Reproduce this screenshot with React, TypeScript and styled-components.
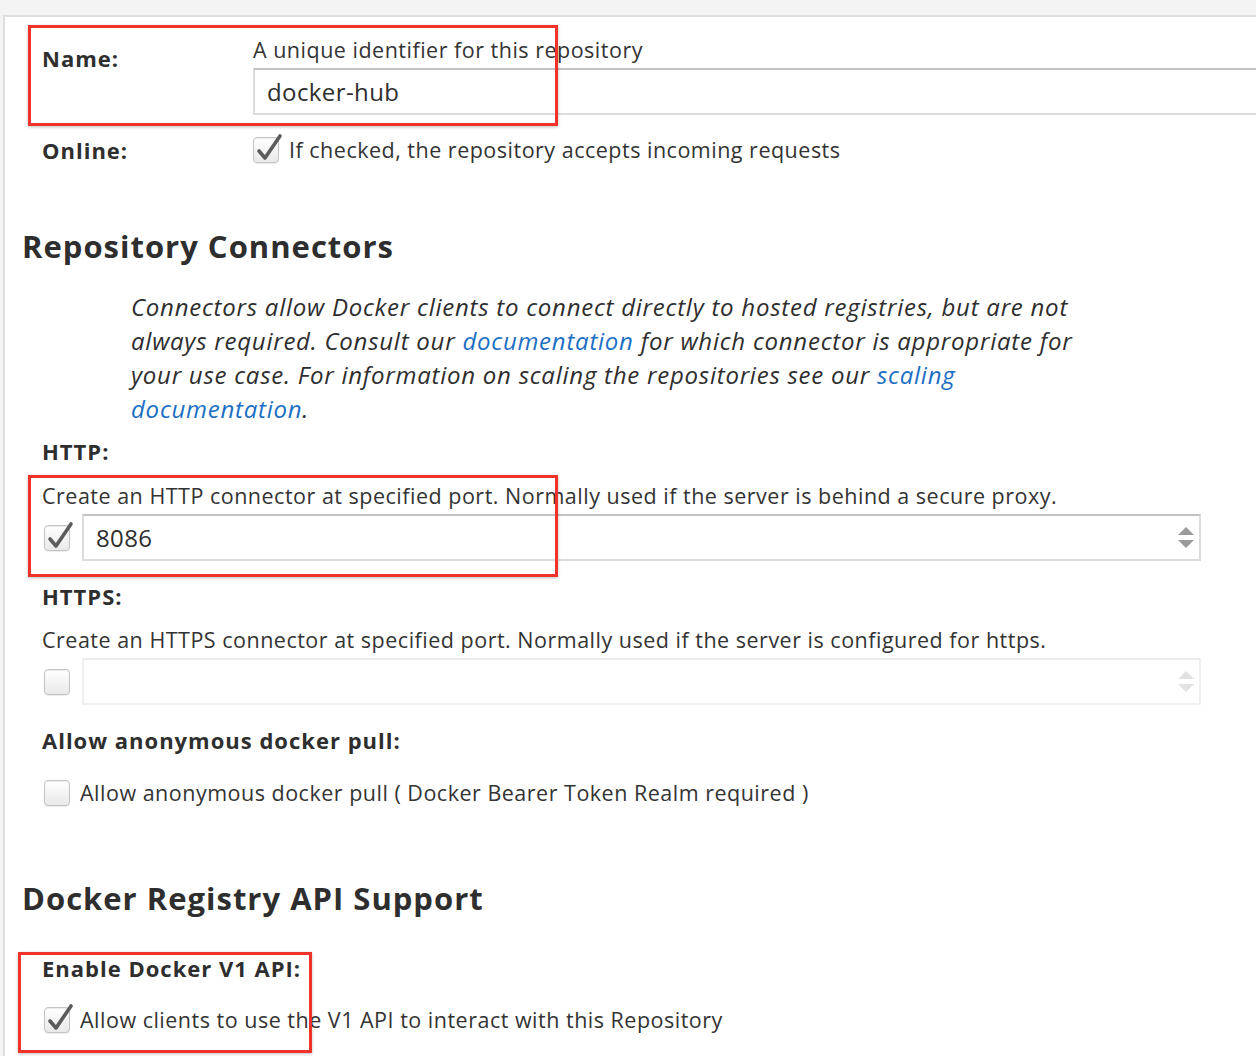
import React from "react";
import styled, { createGlobalStyle } from "styled-components";

const GlobalStyle = createGlobalStyle`
  html, body { margin: 0; padding: 0; background: #f4f4f4; overflow: hidden; }
  body { font-family: "Open Sans", Lato, "Liberation Sans", sans-serif; color: #333; }
  * { box-sizing: border-box; }
`;

const Page = styled.div`
  position: relative;
  width: 1256px;
  height: 1056px;
  padding-top: 15px;
  overflow: hidden;
`;

const Panel = styled.div`
  margin-left: 3px;
  height: 1041px;
  width: 1300px;
  background: #fff;
  border-top: 2px solid #dedede;
  border-left: 2px solid #dedede;
  padding-left: 37px;
  display: flex;
  flex-direction: column;
  align-items: flex-start;
`;

const FieldGrid = styled.div<{ $top: number }>`
  display: grid;
  grid-template-columns: 211px 1fr;
  align-items: start;
  width: 100%;
  margin-top: ${(p) => p.$top}px;
`;

const Label = styled.div<{ $top?: number }>`
  font-weight: 700;
  font-size: 22px;
  letter-spacing: 1px;
  line-height: 24px;
  color: #2e2e2e;
  margin-top: ${(p) => p.$top ?? 0}px;
  white-space: nowrap;
`;

const Hint = styled.div<{ $top?: number }>`
  font-size: 21.5px;
  letter-spacing: 0.5px;
  line-height: 24px;
  color: #333;
  margin-top: ${(p) => p.$top ?? 0}px;
  white-space: nowrap;
`;

const TextInput = styled.div<{ $width: number; $disabled?: boolean }>`
  height: 47px;
  width: ${(p) => p.$width}px;
  border: 2px solid ${(p) => (p.$disabled ? "#f0f0f0" : "#dcdcdc")};
  border-top-color: ${(p) => (p.$disabled ? "#ececec" : "#c2c2c2")};
  background: #fff;
  display: flex;
  align-items: center;
  padding: 0 12px;
  font-size: 24px;
  letter-spacing: 0.4px;
  color: #2e2e2e;
  position: relative;
`;

const Stack = styled.div`
  display: flex;
  flex-direction: column;
`;

const CheckRow = styled.div<{ $top: number }>`
  display: flex;
  align-items: center;
  gap: 10px;
  margin-top: ${(p) => p.$top}px;
`;

const InputRow = styled.div<{ $top: number }>`
  display: flex;
  align-items: center;
  gap: 12px;
  margin-top: ${(p) => p.$top}px;
  padding-left: 2px;
`;

const CheckText = styled.span`
  font-size: 21.5px;
  letter-spacing: 0.5px;
  line-height: 24px;
  color: #333;
  white-space: nowrap;
`;

const Box = styled.span`
  position: relative;
  display: inline-block;
  width: 26px;
  height: 26px;
  flex: none;
  border-radius: 4px;
  border: 1px solid #c4c4c4;
  background: linear-gradient(#ffffff, #e9e9e9);
  box-shadow: inset 0 1px 1px rgba(0, 0, 0, 0.08), 0 1px 1px rgba(0, 0, 0, 0.08);
`;

const CheckMark = styled.svg`
  position: absolute;
  left: 1px;
  top: -6px;
  width: 28px;
  height: 30px;
`;

const Spinner = styled.svg`
  position: absolute;
  right: 4px;
  top: 50%;
  transform: translateY(-50%);
  width: 18px;
  height: 28px;
`;

const Heading = styled.h2<{ $top: number }>`
  margin: ${(p) => p.$top}px 0 0 -20px;
  font-size: 31px;
  letter-spacing: 1px;
  line-height: 40px;
  font-weight: 700;
  color: #2e2e2e;
  white-space: nowrap;
`;

const Para = styled.p`
  margin: 24px 0 0 89px;
  font-style: italic;
  font-size: 24px;
  letter-spacing: 0.75px;
  line-height: 34px;
  color: #2e2e2e;
  white-space: nowrap;
`;

const Link = styled.a`
  color: #1d6fc4;
  text-decoration: none;
`;

const Callout = styled.div<{ $x: number; $y: number; $w: number; $h: number }>`
  position: absolute;
  left: ${(p) => p.$x}px;
  top: ${(p) => p.$y}px;
  width: ${(p) => p.$w}px;
  height: ${(p) => p.$h}px;
  border: 3px solid #f0332a;
  box-shadow: 0 1px 3px rgba(0, 0, 0, 0.25);
  pointer-events: none;
`;

function Checkbox({ checked }: { checked?: boolean }) {
  return (
    <Box>
      {checked && (
        <CheckMark viewBox="0 0 28 30">
          <path d="M4 19 L10 26 L25 4" fill="none" stroke="#5c5c5c" strokeWidth="3.6" strokeLinejoin="round" strokeLinecap="round" />
        </CheckMark>
      )}
    </Box>
  );
}

function NumberSpinner({ disabled }: { disabled?: boolean }) {
  const c = disabled ? "#e2e2e2" : "#9a9a9a";
  return (
    <Spinner viewBox="0 0 18 28">
      <path d="M1 11 L9 3 L17 11 Z" fill={c} />
      <path d="M1 16 L17 16 L9 24 Z" fill={c} />
    </Spinner>
  );
}

export default function App() {
  return (
    <>
      <GlobalStyle />
      <Page>
        <Panel>
          <FieldGrid $top={21}>
            <Label $top={8}>Name:</Label>
            <Stack>
              <Hint>A unique identifier for this repository</Hint>
              <TextInput $width={1100} style={{ marginTop: 6 }}>docker-hub</TextInput>
            </Stack>
          </FieldGrid>
          <FieldGrid $top={22}>
            <Label $top={1}>Online:</Label>
            <CheckRow $top={0}>
              <Checkbox checked />
              <CheckText>If checked, the repository accepts incoming requests</CheckText>
            </CheckRow>
          </FieldGrid>

          <Heading $top={63}>Repository Connectors</Heading>
          <Para>
            Connectors allow Docker clients to connect directly to hosted registries, but are not
            <br />
            always required. Consult our <Link>documentation</Link> for which connector is appropriate for
            <br />
            your use case. For information on scaling the repositories see our <Link>scaling</Link>
            <br />
            <Link>documentation</Link>.
          </Para>

          <Label $top={13}>HTTP:</Label>
          <Hint $top={21}>Create an HTTP connector at specified port. Normally used if the server is behind a secure proxy.</Hint>
          <InputRow $top={6}>
            <Checkbox checked />
            <TextInput $width={1119}>
              8086
              <NumberSpinner />
            </TextInput>
          </InputRow>

          <Label $top={23}>HTTPS:</Label>
          <Hint $top={20}>Create an HTTPS connector at specified port. Normally used if the server is configured for https.</Hint>
          <InputRow $top={6}>
            <Checkbox />
            <TextInput $width={1119} $disabled>
              <NumberSpinner disabled />
            </TextInput>
          </InputRow>

          <Label $top={23}>Allow anonymous docker pull:</Label>
          <CheckRow $top={28} style={{ paddingLeft: 2 }}>
            <Checkbox />
            <CheckText>Allow anonymous docker pull ( Docker Bearer Token Realm required )</CheckText>
          </CheckRow>

          <Heading $top={72}>Docker Registry API Support</Heading>
          <Label $top={38}>Enable Docker V1 API:</Label>
          <CheckRow $top={27} style={{ paddingLeft: 2 }}>
            <Checkbox checked />
            <CheckText>Allow clients to use the V1 API to interact with this Repository</CheckText>
          </CheckRow>
        </Panel>
        <Callout $x={28} $y={25} $w={530} $h={101} />
        <Callout $x={28} $y={475} $w={530} $h={102} />
        <Callout $x={18} $y={952} $w={294} $h={101} />
      </Page>
    </>
  );
}
